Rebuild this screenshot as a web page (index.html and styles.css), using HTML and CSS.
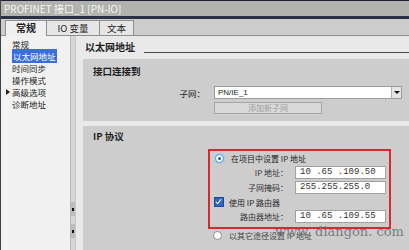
FILE: index.html
```html
<!DOCTYPE html>
<html lang="zh">
<head>
  <meta charset="UTF-8">
  <title>PROFINET 接口_1 [PN-IO]</title>
  <link rel="stylesheet" href="styles.css">
</head>
<body>

  <div class="titlebar">PROFINET 接口_1 [PN-IO]</div>

  <div class="tabs">
    <div class="tab active">常规</div>
    <div class="tab io">IO 变量</div>
    <div class="tab text">文本</div>
  </div>

  <div class="main">
    <ul class="nav">
      <li>常规</li>
      <li class="selected"><span>以太网地址</span></li>
      <li>时间同步</li>
      <li>操作模式</li>
      <li class="has-children">高级选项</li>
      <li>诊断地址</li>
    </ul>

    <div class="splitter">
      <div class="grip"></div>
      <div class="grip"></div>
    </div>

    <div class="content">
      <div class="page-title">
        <span>以太网地址</span>
        <div class="rule"></div>
      </div>

      <div class="section subnet">
        <h2>接口连接到</h2>
        <div class="form-row">
          <label>子网：</label>
          <div class="select">
            <span>PN/IE_1</span>
            <div class="drop"></div>
          </div>
        </div>
        <div class="form-row">
          <label></label>
          <button class="btn" disabled>添加新子网</button>
        </div>
      </div>

      <div class="section ip">
        <h2>IP 协议</h2>
        <div class="highlight">
          <div class="option"><span class="radio checked"></span>在项目中设置 IP 地址</div>
          <div class="field-row"><label>IP 地址：</label><div class="ip-field">10 .65 .109.50</div></div>
          <div class="field-row"><label>子网掩码：</label><div class="ip-field">255.255.255.0</div></div>
          <div class="option"><span class="check"></span>使用 IP 路由器</div>
          <div class="field-row"><label>路由器地址：</label><div class="ip-field">10 .65 .109.55</div></div>
        </div>
        <div class="option other"><span class="radio"></span>以其它途径设置 IP 地址
          <span class="watermark">www. diangon. com</span>
        </div>
      </div>
    </div>
  </div>

</body>
</html>
```
FILE: styles.css
```css
body {
  margin: 0;
  width: 408px;
  height: 250px;
  overflow: hidden;
  background-color: #e9e9e9;
  border-left: 1px solid #3c414c;
  font-family: 'Noto Sans CJK SC', 'Noto Sans', sans-serif;
  color: #1e1e1e;
}
.titlebar {
  height: 15px;
  line-height: 15px;
  border-top: 1px solid #1c2232;
  border-bottom: 3px solid #2b3142;
  background-color: #b2b2ae;
  color: #f6f6f6;
  font-size: 10px;
  padding-left: 3px;
}
.tabs {
  display: flex;
  height: 15px;
  padding: 1px 0 0 4px;
  background-color: #cdcdcd;
  border-bottom: 1px solid #8f8f8f;
}
.tab {
  height: 14px;
  line-height: 14px;
  font-size: 9.5px;
  text-align: center;
  background-color: #e6e6e6;
  border: 1px solid #8f8f8f;
  border-bottom: none;
  margin-right: -1px;
}
.tab.active {
  width: 40px;
  font-weight: bold;
  font-size: 10px;
  background-color: #efefef;
  height: 15px;
  margin-bottom: -1px;
}
.tab.io {
  width: 52px;
}
.tab.text {
  width: 33px;
}
.main {
  display: flex;
  height: 215px;
}
.nav {
  list-style: none;
  margin: 0;
  padding: 2px 0 0 0;
  width: 69px;
  background-color: #f1f1f1;
  font-size: 8.5px;
}
.nav li {
  height: 12px;
  line-height: 12px;
  padding-left: 11px;
  position: relative;
}
.nav li.selected span {
  background-color: #3a6fd8;
  color: #fff;
  padding: 1px 1px;
}
.nav li.has-children::before {
  content: '';
  position: absolute;
  left: 5px;
  top: 3px;
  border-left: 4px solid #222;
  border-top: 3px solid transparent;
  border-bottom: 3px solid transparent;
}
.splitter {
  width: 4px;
  background-color: #d6d6d6;
  border-left: 1px solid #b8b8b8;
  border-right: 1px solid #c8c8c8;
  padding-top: 166px;
  display: flex;
  flex-direction: column;
  gap: 8px;
  align-items: center;
}
.grip {
  width: 4px;
  height: 14px;
  background-color: #bdbdbd;
  position: relative;
}
.grip::after {
  content: '';
  position: absolute;
  left: 1px;
  top: 6px;
  width: 2px;
  height: 3px;
  background-color: #111;
}
.content {
  flex: 1;
  margin-left: 7px;
  display: flex;
  flex-direction: column;
}
.page-title {
  display: flex;
  align-items: flex-end;
  height: 18px;
  font-size: 10px;
  font-weight: bold;
  padding-left: 2px;
}
.page-title span {
  line-height: 14px;
}
.rule {
  flex: 1;
  border-bottom: 1px solid #4a4a4a;
  margin: 0 0 1px 9px;
}
.section {
  background-color: #cdcdcd;
  padding: 6px 0 0 10px;
}
.section h2 {
  margin: 0;
  font-size: 9.5px;
  font-weight: bold;
  line-height: 12px;
}
.subnet {
  margin-top: 5px;
  height: 56px;
}
.form-row {
  display: flex;
  align-items: center;
  margin-bottom: 3px;
}
.subnet h2 {
  margin-bottom: 9px;
}
.form-row label {
  width: 112px;
  text-align: right;
  padding-right: 9px;
  font-size: 8.5px;
  flex-shrink: 0;
}
.select {
  flex: 1;
  height: 11px;
  margin-right: 7px;
  background-color: #fff;
  border: 1px solid #9c9c9c;
  display: flex;
  align-items: center;
  font-family: 'Liberation Sans', sans-serif;
  font-size: 8px;
  padding-left: 3px;
}
.select span {
  flex: 1;
}
.drop {
  width: 9px;
  height: 11px;
  background-color: #e4e4e4;
  border-left: 1px solid #b0b0b0;
  position: relative;
}
.drop::after {
  content: '';
  position: absolute;
  left: 2px;
  top: 4px;
  border-top: 3px solid #111;
  border-left: 3px solid transparent;
  border-right: 3px solid transparent;
}
.btn {
  width: 108px;
  height: 12px;
  padding: 0;
  font-family: inherit;
  font-size: 8px;
  line-height: 10px;
  color: #9e9e9e;
  background-color: #d9d9d9;
  border: 1px solid #a6a6a6;
}
.ip {
  margin-top: 5px;
  flex: 1;
  padding-top: 4px;
}
.ip h2 {
  margin-bottom: 7px;
}
.highlight {
  margin-left: 115px;
  width: 177px;
  height: 76px;
  border: 2px solid #d42a2e;
  padding: 0 0 0 2px;
  font-size: 8px;
}
.option {
  display: flex;
  align-items: center;
  height: 14px;
  font-size: 8px;
  position: relative;
}
.radio {
  width: 7px;
  height: 7px;
  border-radius: 50%;
  background-color: #fff;
  border: 1px solid #8a8a8a;
  margin: 0 7px 0 3px;
  position: relative;
}
.radio.checked {
  border-color: #4a90d9;
  box-shadow: 0 0 0 1px #a8cdf0;
}
.radio.checked::after {
  content: '';
  position: absolute;
  left: 2px;
  top: 2px;
  width: 3px;
  height: 3px;
  border-radius: 50%;
  background-color: #1e5fb8;
}
.check {
  width: 8px;
  height: 8px;
  background-color: #2f66c4;
  border: 1px solid #1d4a96;
  margin: 0 5px 0 2px;
  position: relative;
}
.check::after {
  content: '';
  position: absolute;
  left: 2px;
  top: 0;
  width: 2px;
  height: 5px;
  border-right: 1.5px solid #fff;
  border-bottom: 1.5px solid #fff;
  transform: rotate(40deg);
}
.field-row {
  display: flex;
  align-items: center;
  height: 15px;
}
.field-row label {
  width: 76px;
  text-align: right;
  padding-right: 7px;
  color: #333;
}
.ip-field {
  width: 85px;
  height: 11px;
  line-height: 11px;
  background-color: #fff;
  border: 1px solid #a2a2a2;
  padding-left: 4px;
  font-family: 'Liberation Mono', monospace;
  font-size: 9px;
  white-space: pre;
  color: #333;
}
.option.other {
  margin: 0 0 0 117px;
  height: 12px;
  color: #444;
}
.watermark {
  position: absolute;
  left: 65px;
  top: -5px;
  font-family: 'DejaVu Serif', serif;
  font-size: 13px;
  color: #7e7e7e;
  white-space: nowrap;
}
```
